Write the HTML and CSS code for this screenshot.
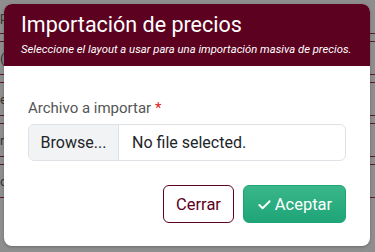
FILE: index.html
```html
<!DOCTYPE html>
<html lang="es">
<head>
<meta charset="utf-8">
<link rel="stylesheet" href="styles.css">
</head>
<body>
<div class="backdrop">
  <div class="row"><span class="cell">p</span></div>
  <div class="row"><span class="cell">(</span></div>
  <div class="row"><span class="cell">e</span></div>
  <div class="row"><span class="cell">r</span></div>
  <div class="row"><span class="cell">o</span></div>
</div>
<div class="modal">
  <div class="modal-header">
    <h1 class="title">Importación de precios</h1>
    <p class="subtitle">Seleccione el layout a usar para una importación masiva de precios.</p>
  </div>
  <div class="modal-body">
    <label class="label">Archivo a importar <span class="req">*</span></label>
    <div class="file">
      <span class="file-btn">Browse...</span>
      <span class="file-name">No file selected.</span>
    </div>
  </div>
  <div class="modal-footer">
    <button class="btn btn-outline">Cerrar</button>
    <button class="btn btn-success"><svg class="check" viewBox="0 0 16 16" width="15" height="15"><path d="M2.5 8.5 L6 12 L13.5 4.5" fill="none" stroke="#fff" stroke-width="2" stroke-linecap="round" stroke-linejoin="round"/></svg>Aceptar</button>
  </div>
</div>
</body>
</html>
```
FILE: styles.css
```css
html, body {
  margin: 0;
  padding: 0;
}
body {
  width: 375px;
  height: 252px;
  overflow: hidden;
  background: #8e8e8e;
  font-family: Roboto, "Noto Sans", sans-serif;
  position: relative;
}
.backdrop {
  display: flex;
  flex-direction: column;
}
.row {
  height: 34px;
  box-sizing: border-box;
  border-bottom: 1px solid #5a1a2a;
  margin-bottom: 7px;
  display: flex;
  align-items: center;
}
.row + .row {
  border-top: 1px solid #5a1a2a;
}
.cell {
  font-size: 13px;
  color: #333;
}
.modal {
  position: absolute;
  left: 4px;
  top: 4px;
  width: 366px;
  height: 242px;
  background: #fff;
  border-radius: 8px;
  overflow: hidden;
  box-shadow: 0 1px 3px rgba(0,0,0,0.25);
  display: flex;
  flex-direction: column;
}
.modal-header {
  background: #5c0220;
  height: 62px;
  box-sizing: border-box;
  padding: 7px 6px 0 17px;
  color: #fff;
}
.title {
  margin: 0;
  font-size: 21.5px;
  font-weight: 400;
  line-height: 28px;
  letter-spacing: 0;
}
.subtitle {
  margin: 4px 0 0;
  font-size: 11.3px;
  font-style: italic;
  line-height: 14px;
  white-space: nowrap;
}
.modal-body {
  padding: 33px 24px 0 24px;
  display: flex;
  flex-direction: column;
}
.label {
  font-size: 15px;
  color: #555;
  line-height: 18px;
  margin-bottom: 7px;
}
.req {
  color: #e02020;
}
.file {
  display: flex;
  height: 37px;
  box-sizing: border-box;
  border: 1px solid #dee2e6;
  border-radius: 6px;
  overflow: hidden;
  font-size: 16px;
  color: #212529;
}
.file-btn {
  width: 90px;
  box-sizing: border-box;
  background: #f1f3f5;
  border-right: 1px solid #dee2e6;
  display: flex;
  align-items: center;
  justify-content: center;
}
.file-name {
  display: flex;
  align-items: center;
  padding-left: 13px;
}
.modal-footer {
  display: flex;
  justify-content: flex-end;
  gap: 9px;
  padding: 24px 24px 0;
}
.btn {
  height: 38px;
  box-sizing: border-box;
  border-radius: 6px;
  font-family: Roboto, "Noto Sans", sans-serif;
  font-size: 16.5px;
  display: flex;
  align-items: center;
  cursor: pointer;
  padding: 0;
}
.btn-outline {
  width: 71px;
  background: #fff;
  border: 1px solid #5c0220;
  color: #5c0220;
  justify-content: center;
}
.btn-success {
  width: 103px;
  border: 1px solid #1ea576;
  background: linear-gradient(#3ab78b, #1ea577);
  color: #fff;
  justify-content: center;
  gap: 3px;
}
.check {
  display: block;
}
```
